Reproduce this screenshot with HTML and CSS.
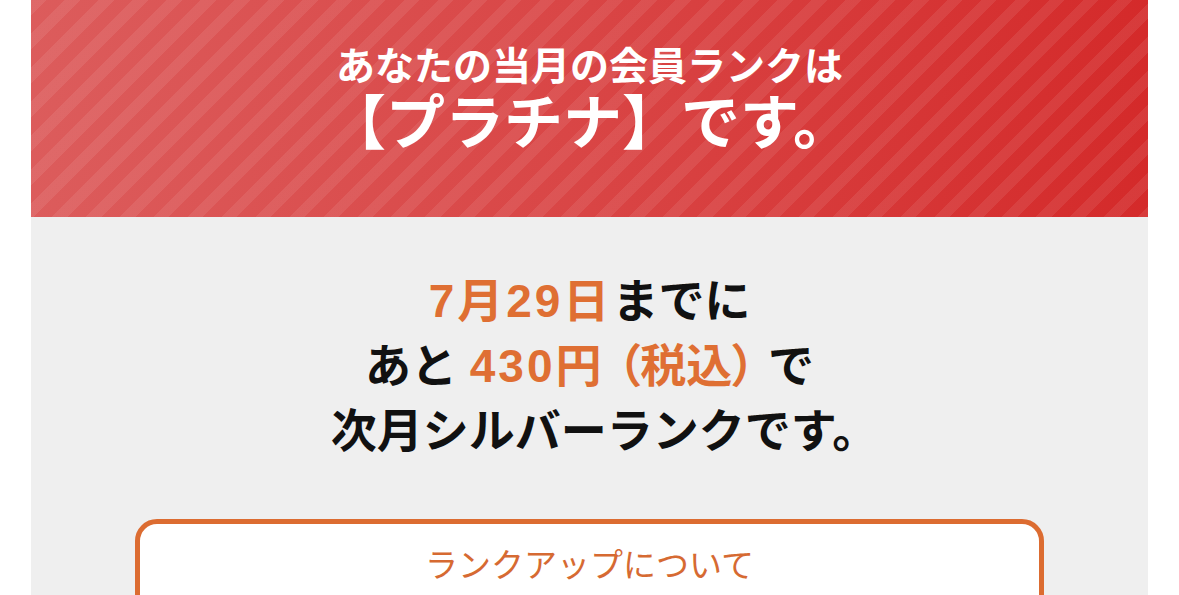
FILE: index.html
```html
<!DOCTYPE html>
<html lang="ja">
  <head>
    <meta charset="UTF-8" />
    <meta name="viewport" content="width=device-width, initial-scale=1.0" />
    <title>会員ランク</title>
    <link rel="stylesheet" href="styles.css">
  </head>
  <body>
    <div class="card">
      <div class="rank-header">
        <p class="rank-lead">あなたの当月の会員ランクは</p>
        <p class="rank-name">【プラチナ】です。</p>
      </div>

      <div class="rank-body">
        <p class="rank-next">
          <span class="accent num">7月29日</span>までに<br />
          あと <span class="accent num">430円</span> <span class="accent tax">（税込）</span> で<br />
          <span class="last">次月シルバーランクです。</span>
        </p>

        <a href="#" class="btn-outline">ランクアップについて</a>
      </div>
    </div>
  </body>
</html>
```

FILE: styles.css
```css
* {
  margin: 0;
  padding: 0;
  box-sizing: border-box;
}

body {
  font-family: "Liberation Sans", "Noto Sans CJK JP", sans-serif;
  background: #ffffff;
  color: #111111;
}

.card {
  margin: 0 31px;
  background: #efefef;
}

/* red banner with diagonal stripes */
.rank-header {
  height: 217px;
  padding-top: 42px;
  text-align: center;
  color: #ffffff;
  font-weight: 700;
  background:
    repeating-linear-gradient(
      135deg,
      rgba(255, 255, 255, 0.08) 0 11px,
      rgba(255, 255, 255, 0) 11px 24px
    ),
    linear-gradient(90deg, #dc5c5c 0%, #d94545 50%, #d42a2a 100%);
}

.rank-lead {
  font-size: 39px;
  line-height: 50px;
}

.rank-name {
  font-size: 59px;
  line-height: 64px;
}

.rank-body {
  padding: 52px 104px 40px;
  text-align: center;
}

.rank-next {
  font-size: 46px;
  font-weight: 700;
  line-height: 65px;
}

.accent {
  color: #df6f33;
}

.num {
  letter-spacing: 3px;
}

.tax {
  font-feature-settings: "palt";
}

.last {
  margin-left: 30px;
}

.btn-outline {
  display: block;
  margin-top: 55px;
  padding: 17px 0 25px;
  border: 5px solid #dc6c31;
  border-radius: 22px;
  background: #ffffff;
  color: #d66a32;
  font-size: 33px;
  line-height: 50px;
  text-decoration: none;
}
```
